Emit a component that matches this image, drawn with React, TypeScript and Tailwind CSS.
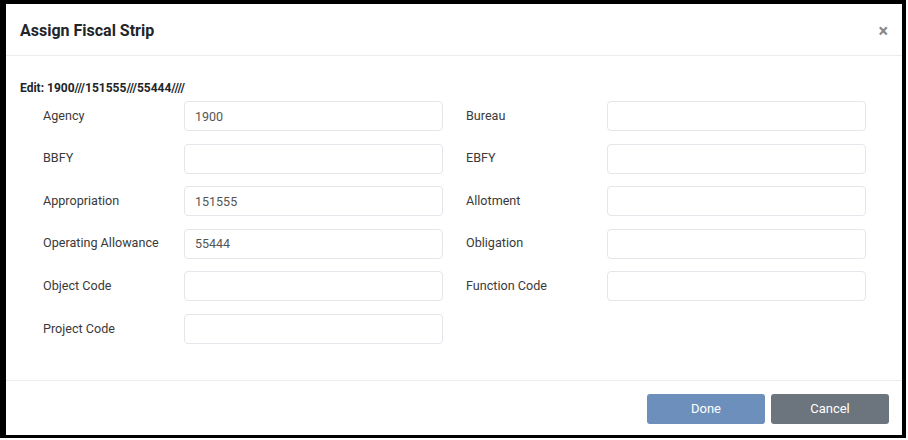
const left = [
  { label: 'Agency', value: '1900' },
  { label: 'BBFY', value: '' },
  { label: 'Appropriation', value: '151555' },
  { label: 'Operating Allowance', value: '55444' },
  { label: 'Object Code', value: '' },
  { label: 'Project Code', value: '' },
]

const right = [
  { label: 'Bureau', value: '' },
  { label: 'EBFY', value: '' },
  { label: 'Allotment', value: '' },
  { label: 'Obligation', value: '' },
  { label: 'Function Code', value: '' },
]

function Field({ label, value }: { label: string; value: string }) {
  return (
    <div className="flex items-center">
      <div className="w-[141px] text-[12.6px] text-[#3a3a3a]">{label}</div>
      <input
        readOnly
        value={value}
        className="w-[259px] h-[30px] rounded-[4px] border border-[#e3e6ea] bg-white px-[10px] text-[12.5px] text-[#555] outline-none"
      />
    </div>
  )
}

export default function App() {
  return (
    <div className="w-[908px] h-[440px] bg-white" style={{ fontFamily: 'Roboto, "Liberation Sans", sans-serif' }}>
      <div className="w-[906px] h-[438px] border-l-[6px] border-t-[4px] border-r-[4px] border-b-[3px] border-black flex flex-col bg-white">
        <div className="h-[52px] flex items-center justify-between pl-[14px] pr-[14px] pt-[2px] border-b border-[#ececec]">
          <h1 className="text-[16px] font-bold text-[#212529]">Assign Fiscal Strip</h1>
          <span className="text-[18px] font-bold text-[#888] leading-none">×</span>
        </div>

        <div className="flex-1 pl-[14px] pt-[26px]">
          <div className="text-[12px] font-bold text-[#212529] leading-none">Edit: 1900///151555///55444////</div>
          <div className="mt-[7px] pl-[23px] flex gap-[23px]">
            <div className="flex flex-col gap-[12.6px]">
              {left.map((f) => (
                <Field key={f.label} {...f} />
              ))}
            </div>
            <div className="flex flex-col gap-[12.6px]">
              {right.map((f) => (
                <Field key={f.label} {...f} />
              ))}
            </div>
          </div>
        </div>

        <div className="h-[55px] border-t border-[#ececec] flex items-center justify-end gap-[6px] pr-[13px] pt-[2px]">
          <button className="w-[118px] h-[30px] rounded-[3px] bg-[#6d8fbb] text-white text-[13px]">Done</button>
          <button className="w-[118px] h-[30px] rounded-[3px] bg-[#6c757d] text-white text-[13px]">Cancel</button>
        </div>
      </div>
    </div>
  )
}
